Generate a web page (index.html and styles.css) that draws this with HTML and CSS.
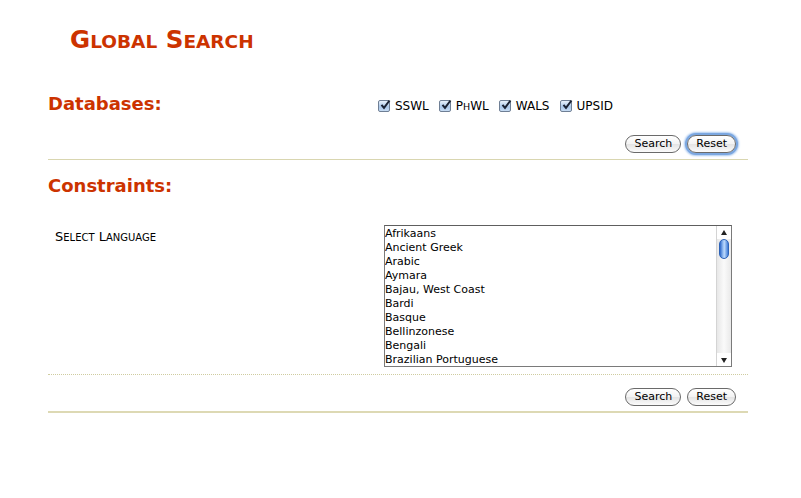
FILE: index.html
```html
<!DOCTYPE html>
<html>
<head>
<meta charset="utf-8">
<link rel="stylesheet" href="styles.css">
</head>
<body>
<div class="page">
  <h1 class="title">G<span class="sm">LOBAL</span> S<span class="sm">EARCH</span></h1>

  <div class="db-row">
    <h2 class="section">Databases:</h2>
    <div class="dbs">
      <label class="db"><span class="cb"><svg viewBox="0 0 12 12" width="12" height="12"><path d="M2.5 5.8 L5 8.8 L10.5 1.5" fill="none" stroke="#1a2233" stroke-width="2"/></svg></span>SSWL</label>
      <label class="db"><span class="cb"><svg viewBox="0 0 12 12" width="12" height="12"><path d="M2.5 5.8 L5 8.8 L10.5 1.5" fill="none" stroke="#1a2233" stroke-width="2"/></svg></span><span>P<span class="smh">H</span>WL</span></label>
      <label class="db"><span class="cb"><svg viewBox="0 0 12 12" width="12" height="12"><path d="M2.5 5.8 L5 8.8 L10.5 1.5" fill="none" stroke="#1a2233" stroke-width="2"/></svg></span>WALS</label>
      <label class="db"><span class="cb"><svg viewBox="0 0 12 12" width="12" height="12"><path d="M2.5 5.8 L5 8.8 L10.5 1.5" fill="none" stroke="#1a2233" stroke-width="2"/></svg></span>UPSID</label>
    </div>
  </div>

  <div class="btn-row">
    <button class="btn">Search</button>
    <button class="btn focus">Reset</button>
  </div>

  <div class="rule"></div>

  <h2 class="section constraints">Constraints:</h2>

  <div class="field-row">
    <div class="field-label">S<span class="sml">ELECT</span> L<span class="sml">ANGUAGE</span></div>
    <div class="listbox">
      <ul class="options">
        <li>Afrikaans</li>
        <li>Ancient Greek</li>
        <li>Arabic</li>
        <li>Aymara</li>
        <li>Bajau, West Coast</li>
        <li>Bardi</li>
        <li>Basque</li>
        <li>Bellinzonese</li>
        <li>Bengali</li>
        <li>Brazilian Portuguese</li>
      </ul>
      <div class="scrollbar">
        <div class="arrow up"></div>
        <div class="track"><div class="thumb"></div></div>
        <div class="arrow down"></div>
      </div>
    </div>
  </div>

  <div class="dotted"></div>

  <div class="btn-row bottom">
    <button class="btn">Search</button>
    <button class="btn">Reset</button>
  </div>

  <div class="rule thick"></div>
</div>
</body>
</html>
```

FILE: styles.css
```css
html, body {
  margin: 0;
  padding: 0;
  background: #ffffff;
}

body {
  font-family: "DejaVu Sans", Verdana, sans-serif;
  color: #000;
}

.page {
  width: 700px;
  margin-left: 48px;
  padding-top: 26px;
}

.title {
  margin: 0 0 0 22px;
  font-size: 24.5px;
  line-height: 28px;
  font-weight: bold;
  color: #cc3300;
}

.title .sm {
  font-size: 18.5px;
}

.section {
  margin: 0;
  font-size: 18px;
  line-height: 24px;
  font-weight: bold;
  color: #cc3300;
}

.db-row {
  display: flex;
  align-items: flex-start;
  margin-top: 36px;
}

.db-row .section {
  width: 330px;
}

.dbs {
  display: flex;
  gap: 10px;
  padding-top: 4px;
}

.db {
  display: flex;
  align-items: center;
  gap: 5px;
  font-size: 12px;
  line-height: 20px;
}

.smh {
  font-size: 9.5px;
  line-height: 0;
}

.cb {
  width: 12px;
  height: 12px;
  border: 1px solid #6f7f95;
  border-radius: 2px;
  background: linear-gradient(#e8f1fb, #a9c7ea 60%, #c7dcf3);
  display: inline-flex;
  box-sizing: border-box;
  position: relative;
}

.cb svg {
  position: absolute;
  left: 0;
  top: -2px;
}

.btn-row {
  display: flex;
  justify-content: flex-end;
  gap: 6px;
  margin-top: 19px;
  padding-right: 12px;
}

.btn {
  font-family: "DejaVu Sans", Verdana, sans-serif;
  font-size: 11px;
  height: 18px;
  padding: 0 8px;
  line-height: 16px;
  border: 1px solid #6a6a6a;
  border-radius: 9px;
  background: linear-gradient(#ffffff, #f3f3f3 50%, #e4e4e4 51%, #fbfbfb);
  color: #000;
}

.btn.focus {
  box-shadow: 0 0 0 2px #7ba7e0, 0 0 2px 3px #a9c8f0;
}

.rule {
  height: 1px;
  background: #d9d6b0;
  margin-top: 6px;
}

.rule.thick {
  height: 2px;
  background: #ddd9b4;
  margin-top: 5px;
}

.constraints {
  margin-top: 14px;
}

.field-row {
  display: flex;
  margin-top: 27px;
}

.field-label {
  width: 329px;
  padding-left: 7px;
  padding-top: 4px;
  font-size: 13px;
  line-height: 15px;
}

.field-label .sml {
  font-size: 10px;
}

.listbox {
  display: flex;
  width: 348px;
  height: 142px;
  box-sizing: border-box;
  border: 1px solid #7a7a7a;
  border-top-color: #5e5e5e;
  background: #fff;
}

.options {
  list-style: none;
  margin: 0;
  padding: 1px 0 0 0;
  flex: 1;
  overflow: hidden;
}

.options li {
  font-size: 11px;
  line-height: 14px;
  white-space: nowrap;
}

.scrollbar {
  width: 14px;
  display: flex;
  flex-direction: column;
  border-left: 1px solid #d4d4d4;
  background: linear-gradient(90deg, #e7e7e7, #fafafa 50%, #e9e9e9);
}

.arrow {
  height: 13px;
  position: relative;
  background: #fff;
}

.arrow::after {
  content: "";
  position: absolute;
  left: 4px;
  width: 0;
  height: 0;
  border-left: 3px solid transparent;
  border-right: 3px solid transparent;
}

.arrow.up::after {
  top: 4px;
  border-bottom: 5px solid #222;
}

.arrow.down::after {
  top: 5px;
  border-top: 5px solid #222;
}

.track {
  flex: 1;
  padding: 0 1px;
}

.thumb {
  height: 18px;
  margin: 0 1px;
  border-radius: 6px;
  border: 1px solid #2d63b8;
  background: linear-gradient(90deg, #2c67c9, #9cc3f5 40%, #b9d7fb 55%, #3f7bd6);
}

.dotted {
  margin-top: 7px;
  border-top: 1px dotted #cfcca0;
}

.btn-row.bottom {
  margin-top: 13px;
}
```
